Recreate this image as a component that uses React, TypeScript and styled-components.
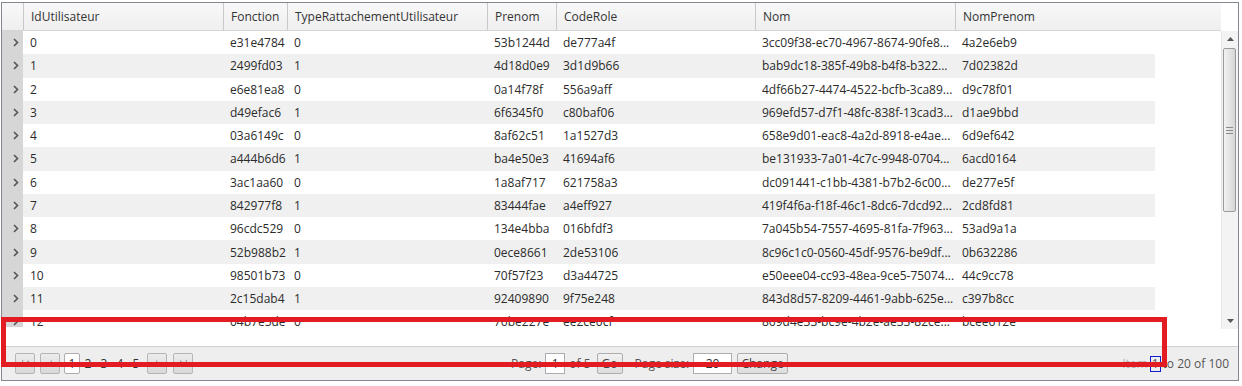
import React from "react";
import styled, { createGlobalStyle } from "styled-components";

const Global = createGlobalStyle`
  html, body { margin: 0; padding: 0; background: #ffffff; }
  body { font-family: "Open Sans", "Noto Sans", Arial, sans-serif; font-size: 12px; color: #333; }
`;

const ROW_H = 23.27;

const columns = [
  { key: "IdUtilisateur", w: 200 },
  { key: "Fonction", w: 64 },
  { key: "TypeRattachementUtilisateur", w: 200 },
  { key: "Prenom", w: 69 },
  { key: "CodeRole", w: 199 },
  { key: "Nom", w: 200 },
  { key: "NomPrenom", w: 200 },
];

const rows: string[][] = [
  ["0", "e31e4784", "0", "53b1244d", "de777a4f", "3cc09f38-ec70-4967-8674-90fe8...", "4a2e6eb9"],
  ["1", "2499fd03", "1", "4d18d0e9", "3d1d9b66", "bab9dc18-385f-49b8-b4f8-b322...", "7d02382d"],
  ["2", "e6e81ea8", "0", "0a14f78f", "556a9aff", "4df66b27-4474-4522-bcfb-3ca89...", "d9c78f01"],
  ["3", "d49efac6", "1", "6f6345f0", "c80baf06", "969efd57-d7f1-48fc-838f-13cad3...", "d1ae9bbd"],
  ["4", "03a6149c", "0", "8af62c51", "1a1527d3", "658e9d01-eac8-4a2d-8918-e4ae...", "6d9ef642"],
  ["5", "a444b6d6", "1", "ba4e50e3", "41694af6", "be131933-7a01-4c7c-9948-0704...", "6acd0164"],
  ["6", "3ac1aa60", "0", "1a8af717", "621758a3", "dc091441-c1bb-4381-b7b2-6c00...", "de277e5f"],
  ["7", "842977f8", "1", "83444fae", "a4eff927", "419f4f6a-f18f-46c1-8dc6-7dcd92...", "2cd8fd81"],
  ["8", "96cdc529", "0", "134e4bba", "016bfdf3", "7a045b54-7557-4695-81fa-7f963...", "53ad9a1a"],
  ["9", "52b988b2", "1", "0ece8661", "2de53106", "8c96c1c0-0560-45df-9576-be9df...", "0b632286"],
  ["10", "98501b73", "0", "70f57f23", "d3a44725", "e50eee04-cc93-48ea-9ce5-75074...", "44c9cc78"],
  ["11", "2c15dab4", "1", "92409890", "9f75e248", "843d8d57-8209-4461-9abb-625e...", "c397b8cc"],
  ["12", "04b7e5de", "0", "76be227e", "ee2ce0cf", "869d4e33-bc9e-4b2e-ae33-82ce...", "bcee612e"],
];

const Frame = styled.div`
  box-sizing: border-box;
  margin: 2px 0 0 1px;
  width: 1238px;
  height: 379px;
  border: 1px solid #828790;
  display: flex;
  flex-direction: column;
  position: relative;
  background: #fff;
`;

const GridArea = styled.div`
  display: flex;
  height: 343px;
`;

const MainCol = styled.div`
  width: 1219px;
  display: flex;
  flex-direction: column;
`;

const HeaderRow = styled.div`
  display: flex;
  height: 28px;
  box-sizing: border-box;
  border-bottom: 1px solid #d5d5d5;
  background: linear-gradient(#f8f8f8, #efefef);
`;

const HeaderCorner = styled.div`
  width: 21px;
  flex: none;
`;

const HeaderCell = styled.div<{ $w: number }>`
  width: ${(p) => p.$w}px;
  flex: none;
  box-sizing: border-box;
  border-left: 1px solid #c9c9c9;
  padding-left: 7px;
  display: flex;
  align-items: center;
  color: #333;
  white-space: nowrap;
  overflow: hidden;
`;

const Viewport = styled.div`
  height: 296px;
  overflow: hidden;
`;

const Row = styled.div<{ $alt: boolean }>`
  display: flex;
  height: ${ROW_H}px;
  width: 1153px;
  background: ${(p) => (p.$alt ? "#f0f0f0" : "#ffffff")};
`;

const RowHeader = styled.div`
  width: 21px;
  flex: none;
  background: #d6d6d6;
  display: flex;
  align-items: center;
  justify-content: flex-end;
  padding-right: 4px;
  box-sizing: border-box;
`;

const Cell = styled.div<{ $w: number }>`
  width: ${(p) => p.$w}px;
  flex: none;
  box-sizing: border-box;
  padding-left: 7px;
  display: flex;
  align-items: center;
  white-space: nowrap;
  overflow: hidden;
  color: #2b2b2b;
`;

const BlankStrip = styled.div`
  flex: 1;
  background: #fff;
`;

const ScrollCol = styled.div`
  width: 17px;
  display: flex;
  flex-direction: column;
`;

const ScrollTopGap = styled.div`
  height: 28px;
`;

const ScrollBar = styled.div`
  height: 298px;
  background: #f3f3f3;
  border-left: 1px solid #e6e6e6;
  display: flex;
  flex-direction: column;
  align-items: center;
  box-sizing: border-box;
`;

const ArrowBox = styled.div`
  height: 16px;
  width: 100%;
  display: flex;
  align-items: center;
  justify-content: center;
`;

const Track = styled.div`
  flex: 1;
  width: 100%;
  position: relative;
`;

const Thumb = styled.div`
  position: absolute;
  left: 1px;
  top: 1px;
  width: 13px;
  height: 164px;
  box-sizing: border-box;
  border: 1px solid #9a9a9a;
  border-radius: 2px;
  background: linear-gradient(to right, #f2f2f2, #e4e4e4 50%, #d6d6d6);
  display: flex;
  align-items: center;
  justify-content: center;
`;

const Pager = styled.div`
  height: 34px;
  box-sizing: border-box;
  border-top: 1px solid #cfcfcf;
  background: #eeeeee;
  display: flex;
  align-items: center;
  padding-left: 13px;
  padding-right: 9px;
  color: #444;
`;

const NavGroup = styled.div`
  display: flex;
  align-items: center;
`;

const NavButton = styled.div<{ $ml?: number }>`
  width: 20px;
  height: 21px;
  box-sizing: border-box;
  border: 1px solid #b5b5b5;
  border-radius: 2px;
  background: linear-gradient(#ececec, #d9d9d9);
  margin-left: ${(p) => p.$ml ?? 0}px;
  display: flex;
  align-items: center;
  justify-content: center;
`;

const PageNum = styled.div<{ $active?: boolean }>`
  width: 16px;
  height: 21px;
  box-sizing: border-box;
  display: flex;
  align-items: center;
  justify-content: center;
  background: ${(p) => (p.$active ? "#fff" : "transparent")};
  border: ${(p) => (p.$active ? "1px solid #adadad" : "none")};
  border-radius: 2px;
  color: #333;
`;

const CenterGroup = styled.div`
  display: flex;
  align-items: center;
  margin-left: 318px;
`;

const Label = styled.span<{ $ml?: number }>`
  margin-left: ${(p) => p.$ml ?? 0}px;
  color: #555;
  white-space: nowrap;
`;

const Input = styled.div<{ $w: number; $ml?: number }>`
  width: ${(p) => p.$w}px;
  height: 21px;
  box-sizing: border-box;
  border: 1px solid #abadb3;
  background: #fff;
  margin-left: ${(p) => p.$ml ?? 0}px;
  display: flex;
  align-items: center;
  justify-content: center;
  color: #333;
`;

const Button = styled.div<{ $w: number; $ml?: number }>`
  width: ${(p) => p.$w}px;
  height: 21px;
  box-sizing: border-box;
  border: 1px solid #adadad;
  border-radius: 2px;
  background: linear-gradient(#f2f2f2, #dddddd);
  margin-left: ${(p) => p.$ml ?? 0}px;
  display: flex;
  align-items: center;
  justify-content: center;
  color: #444;
`;

const ItemInfo = styled.div`
  margin-left: auto;
  color: #555;
  white-space: nowrap;
  display: flex;
  align-items: center;
`;

const Faded = styled.span`
  color: #b0b0b0;
`;

const Focused = styled.span`
  outline: 1px solid #1020c8;
  outline-offset: 0px;
  margin: 0 3px;
  padding: 0 1px;
  line-height: 14px;
`;

const Annotation = styled.div`
  position: absolute;
  left: -1px;
  top: 314px;
  width: 1166px;
  height: 50px;
  box-sizing: border-box;
  border: 5px solid #e31c24;
  pointer-events: none;
`;

const Chevron = () => (
  <svg width="6" height="9" viewBox="0 0 6 9">
    <polyline points="1,1 4.5,4.5 1,8" fill="none" stroke="#555" strokeWidth="1.6" />
  </svg>
);

const IconFirst = () => (
  <svg width="9" height="9" viewBox="0 0 9 9">
    <rect x="1" y="1" width="1.3" height="7" fill="#a6a6a6" />
    <polygon points="8,1 8,8 3.5,4.5" fill="#a6a6a6" />
  </svg>
);
const IconPrev = () => (
  <svg width="9" height="9" viewBox="0 0 9 9">
    <polygon points="6,1 6,8 2,4.5" fill="#a6a6a6" />
  </svg>
);
const IconNext = () => (
  <svg width="9" height="9" viewBox="0 0 9 9">
    <polygon points="3,1 3,8 7,4.5" fill="#a6a6a6" />
  </svg>
);
const IconLast = () => (
  <svg width="9" height="9" viewBox="0 0 9 9">
    <polygon points="1,1 1,8 5.5,4.5" fill="#a6a6a6" />
    <rect x="6.7" y="1" width="1.3" height="7" fill="#a6a6a6" />
  </svg>
);

const ArrowUp = () => (
  <svg width="7" height="4" viewBox="0 0 7 4">
    <polygon points="0,4 7,4 3.5,0" fill="#555" />
  </svg>
);
const ArrowDown = () => (
  <svg width="7" height="4" viewBox="0 0 7 4">
    <polygon points="0,0 7,0 3.5,4" fill="#555" />
  </svg>
);
const Grip = () => (
  <svg width="7" height="7" viewBox="0 0 7 7">
    <rect x="0" y="0" width="7" height="1" fill="#8a8a8a" />
    <rect x="0" y="3" width="7" height="1" fill="#8a8a8a" />
    <rect x="0" y="6" width="7" height="1" fill="#8a8a8a" />
  </svg>
);

export default function App() {
  return (
    <>
      <Global />
      <Frame>
        <GridArea>
          <MainCol>
            <HeaderRow>
              <HeaderCorner />
              {columns.map((c) => (
                <HeaderCell key={c.key} $w={c.w}>
                  {c.key}
                </HeaderCell>
              ))}
            </HeaderRow>
            <Viewport>
              {rows.map((r, i) => (
                <Row key={i} $alt={i % 2 === 1}>
                  <RowHeader>
                    <Chevron />
                  </RowHeader>
                  {r.map((v, j) => (
                    <Cell key={j} $w={columns[j].w}>
                      {v}
                    </Cell>
                  ))}
                </Row>
              ))}
            </Viewport>
            <BlankStrip />
          </MainCol>
          <ScrollCol>
            <ScrollTopGap />
            <ScrollBar>
              <ArrowBox>
                <ArrowUp />
              </ArrowBox>
              <Track>
                <Thumb>
                  <Grip />
                </Thumb>
              </Track>
              <ArrowBox>
                <ArrowDown />
              </ArrowBox>
            </ScrollBar>
          </ScrollCol>
        </GridArea>
        <Pager>
          <NavGroup>
            <NavButton>
              <IconFirst />
            </NavButton>
            <NavButton $ml={5}>
              <IconPrev />
            </NavButton>
            <NavGroup style={{ marginLeft: 4 }}>
              <PageNum $active>1</PageNum>
              <PageNum>2</PageNum>
              <PageNum>3</PageNum>
              <PageNum>4</PageNum>
              <PageNum>5</PageNum>
            </NavGroup>
            <NavButton $ml={3}>
              <IconNext />
            </NavButton>
            <NavButton $ml={6}>
              <IconLast />
            </NavButton>
          </NavGroup>
          <CenterGroup>
            <Label>Page:</Label>
            <Input $w={20} $ml={4}>1</Input>
            <Label $ml={4}>of 5</Label>
            <Button $w={26} $ml={6}>Go</Button>
            <Label $ml={12}>Page size:</Label>
            <Input $w={39} $ml={4}>20</Input>
            <Button $w={51} $ml={5}>Change</Button>
          </CenterGroup>
          <ItemInfo>
            <Faded>Item</Faded>
            <Focused>1</Focused>
            <span>to 20 of 100</span>
          </ItemInfo>
        </Pager>
        <Annotation />
      </Frame>
    </>
  );
}
